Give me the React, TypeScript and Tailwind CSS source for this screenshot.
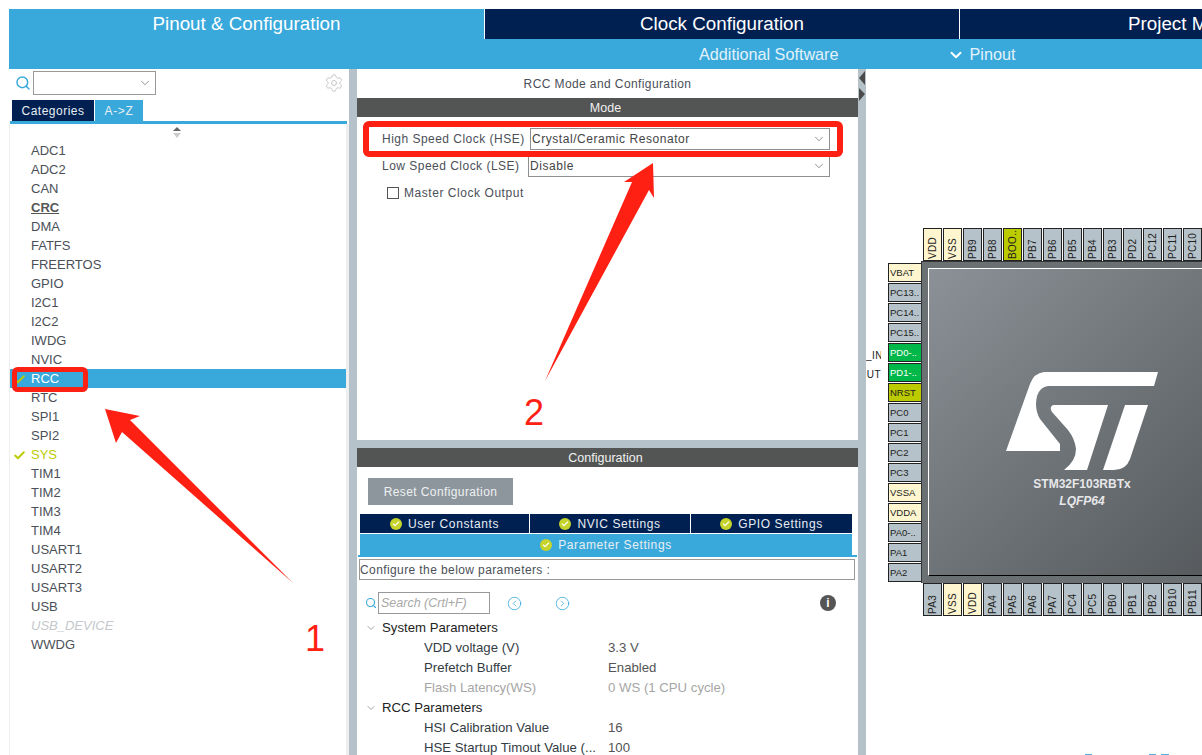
import * as React from 'react';
import { Check, ChevronDown, CircleChevronLeft, CircleChevronRight, Search, Settings } from 'lucide-react';

type PinKind = 'io' | 'power' | 'fixed' | 'on';

const KIND: Record<string, PinKind> = {
  VDD: 'power', VSS: 'power', VBAT: 'power', VSSA: 'power', VDDA: 'power',
  'BOO..': 'fixed', NRST: 'fixed', 'PD0-..': 'on', 'PD1-..': 'on',
};

const TOP_PINS = ['VDD', 'VSS', 'PB9', 'PB8', 'BOO..', 'PB7', 'PB6', 'PB5', 'PB4', 'PB3', 'PD2', 'PC12', 'PC11', 'PC10'];
const LEFT_PINS = ['VBAT', 'PC13..', 'PC14..', 'PC15..', 'PD0-..', 'PD1-..', 'NRST', 'PC0', 'PC1', 'PC2', 'PC3', 'VSSA', 'VDDA', 'PA0-..', 'PA1', 'PA2'];
const BOTTOM_PINS = ['PA3', 'VSS', 'VDD', 'PA4', 'PA5', 'PA6', 'PA7', 'PC4', 'PC5', 'PB0', 'PB1', 'PB2', 'PB10', 'PB11'];

const IP_LIST = ['ADC1', 'ADC2', 'CAN', 'CRC', 'DMA', 'FATFS', 'FREERTOS', 'GPIO', 'I2C1', 'I2C2', 'IWDG', 'NVIC', 'RCC', 'RTC', 'SPI1', 'SPI2', 'SYS', 'TIM1', 'TIM2', 'TIM3', 'TIM4', 'USART1', 'USART2', 'USART3', 'USB', 'USB_DEVICE', 'WWDG'];

const pinColor = (name: string) => {
  const kind = KIND[name] ?? 'io';
  if (kind === 'power') return 'bg-[#fff6cf] text-[#222]';
  if (kind === 'fixed') return 'bg-[#bccb00] text-[#222]';
  if (kind === 'on') return 'bg-[#00b74a] text-white';
  return 'bg-[#b6c2c9] text-[#222]';
};

// Pins above and below the package, label reads bottom to top
const VerticalPin = ({ name }: { name: string }) => (
  <div className={`flex h-[33px] w-[19px] shrink-0 items-center justify-center border border-[#222] pl-[1px] ${pinColor(name)}`}>
    <span className="h-full rotate-180 whitespace-nowrap pt-[1px] text-left text-[10px] leading-[16px] tracking-[0.3px] [writing-mode:vertical-rl]">{name}</span>
  </div>
);

const HorizontalPin = ({ name }: { name: string }) => (
  <div className={`flex h-[19px] w-[33px] shrink-0 items-center whitespace-nowrap border border-r-0 border-[#222] pl-[1px] pt-[2px] text-[9.5px] ${pinColor(name)}`}>
    {name}
  </div>
);

const StLogo = () => (
  <svg width="154" height="100" viewBox="1005 372 154 100" className="block">
    <path fill="#fff" d="M1158 373 L1044 373 Q1034 374 1030 385 L1006 452 L1060 452 L1060 445 L1040 420 Q1034 410 1037 397 Q1040 388 1048 387 L1154 387 Z" />
    <path fill="#fff" d="M1053 406 L1108 406 L1087 471 L1064 471 Q1076 462 1076 450 Q1075 440 1068 431 L1052 413 Q1049 408 1053 406 Z" />
    <path fill="#fff" d="M1125 406 L1148 406 L1130 460 Q1126 471 1114 471 L1103 471 Z" />
  </svg>
);

const TabCheck = () => (
  <span className="mr-[6px] flex h-[12px] w-[12px] items-center justify-center rounded-full bg-[#c5d32a]">
    <Check size={8} strokeWidth={3.5} className="text-white" />
  </span>
);

const ConfigTab = ({ label, className }: { label: string; className: string }) => (
  <div className={`flex items-center justify-center text-[12px] tracking-[0.6px] text-[#e8eef2] ${className}`}>
    <TabCheck />
    {label}
  </div>
);

const ParamRow = ({ label, value, muted }: { label: string; value: string; muted?: boolean }) => (
  <div className={`flex h-[20px] items-center pl-[67px] text-[13.2px] ${muted ? 'text-[#a6a6a6]' : 'text-[#333c44]'}`}>
    <span className="w-[184px] whitespace-nowrap">{label}</span>
    <span className={muted ? '' : 'text-[#555]'}>{value}</span>
  </div>
);

const ParamGroup = ({ label }: { label: string }) => (
  <div className="flex h-[20px] items-center pl-[8px] text-[13.2px] text-[#222]">
    <ChevronDown size={12} strokeWidth={1.2} className="mr-[5px] text-[#666]" />
    {label}
  </div>
);

const SelectBox = ({ value, className }: { value: string; className: string }) => (
  <div className={`flex items-center justify-between border border-[#8f8f8f] bg-white pl-[1px] pr-[3px] text-[12px] tracking-[0.55px] text-[#444] ${className}`}>
    {value}
    <ChevronDown size={14} strokeWidth={1.2} className="text-[#666]" />
  </div>
);

const LeftPanel = () => (
  <div className="flex w-[340px] shrink-0 flex-col">
    <div className="flex h-[31px] items-start pl-[6px] pr-[5px] pt-[2px]">
      <div className="flex h-[24px] w-full items-center">
        <Search size={16} strokeWidth={2.2} className="text-[#39a9dc]" />
        <div className="ml-[2px] flex h-[24px] w-[123px] items-center justify-end border border-[#999] pr-[3px]">
          <ChevronDown size={14} strokeWidth={1.2} className="text-[#666]" />
        </div>
        <Settings size={20} strokeWidth={1.2} className="ml-auto text-[#c8c8c8]" />
      </div>
    </div>
    <div className="flex h-[21px] pl-[3px]">
      <div className="flex w-[82px] items-center justify-center bg-[#002052] text-[12px] tracking-[0.5px] text-[#e8eef2]">Categories</div>
      <div className="ml-[1px] flex w-[48px] items-center justify-center bg-[#39a9dc] text-[12px] tracking-[0.7px] text-[#e8eef2]">A-&gt;Z</div>
    </div>
    <div className="ml-[1px] mr-[2px] h-[3px] bg-[#39a9dc]" />
    <div className="flex-1 border-l border-r-[3px] border-[#eeeeee] pr-0">
      <div className="flex h-[17px] justify-center pt-[3px] pr-[2px]">
        <svg width="8" height="11" viewBox="0 0 8 11">
          <path d="M4 0 L8 4 L0 4 Z" fill="#666" />
          <path d="M0 6 L8 6 L4 11 Z" fill="#ccc" />
        </svg>
      </div>
      {IP_LIST.map((name) => {
        const selected = name === 'RCC';
        const checked = selected || name === 'SYS';
        const color = selected
          ? 'bg-[#39a9dc] text-white'
          : name === 'SYS'
            ? 'text-[#bccb00]'
            : name === 'USB_DEVICE'
              ? 'italic text-[#c4c8cc]'
              : name === 'CRC'
                ? 'font-bold text-[#555] underline'
                : 'text-[#4b4f58]';
        return (
          <div key={name} className={`flex h-[19px] items-center pt-[1px] text-[13px] ${color}`}>
            <span className="flex w-[21px] justify-end pr-[5px]">
              {checked && <Check size={13} strokeWidth={3.5} className="text-[#bccb00]" />}
            </span>
            {name}
          </div>
        );
      })}
    </div>
  </div>
);

const MiddlePanel = () => (
  <div className="flex w-[501px] shrink-0 flex-col">
    <div className="flex h-[371px] flex-col">
      <div className="flex h-[29px] items-center justify-center text-[12px] tracking-[0.4px] text-[#4b4f58]">RCC Mode and Configuration</div>
      <div className="flex h-[19px] items-center justify-center bg-[#535554] pr-[4px] pt-[1px] text-[12.5px] text-[#f1f1f1]">Mode</div>
      <div className="mt-[11px] flex h-[22px] items-center pl-[25px] text-[12px] tracking-[0.48px] text-[#4b4f58]">
        <span className="w-[148px]">High Speed Clock (HSE)</span>
        <SelectBox value="Crystal/Ceramic Resonator" className="h-[22px] w-[300px]" />
      </div>
      <div className="mt-[5px] flex h-[22px] items-center pl-[25px] text-[12px] tracking-[0.48px] text-[#4b4f58]">
        <span className="w-[146px]">Low Speed Clock (LSE)</span>
        <SelectBox value="Disable" className="h-[22px] w-[302px]" />
      </div>
      <div className="mt-[6px] flex h-[20px] items-center pl-[30px] text-[12px] tracking-[0.55px] text-[#4b4f58]">
        <span className="mr-[5px] h-[12px] w-[12px] border border-[#555]" />
        Master Clock Output
      </div>
    </div>
    <div className="h-[8px] bg-[#b6c2c9]" />
    <div className="flex flex-1 flex-col overflow-hidden">
      <div className="flex h-[19px] shrink-0 items-center justify-center bg-[#535554] pr-[4px] pt-[1px] text-[12.5px] text-[#f1f1f1]">Configuration</div>
      <div className="mt-[11px] ml-[11px] flex h-[27px] w-[145px] shrink-0 items-center justify-center bg-[#8d969c] text-[12px] tracking-[0.4px] text-[#eef1f3]">Reset Configuration</div>
      <div className="mt-[9px] ml-[3px] flex h-[19px] w-[492px] shrink-0 gap-[1px]">
        <ConfigTab label="User Constants" className="w-[169px] bg-[#002052]" />
        <ConfigTab label="NVIC Settings" className="w-[160px] bg-[#002052]" />
        <ConfigTab label="GPIO Settings" className="flex-1 bg-[#002052]" />
      </div>
      <ConfigTab label="Parameter Settings" className="mt-[1px] ml-[3px] h-[21px] w-[492px] shrink-0 bg-[#39a9dc]" />
      <div className="ml-[1px] mr-[1px] h-[2px] shrink-0 bg-[#39a9dc]" />
      <div className="mt-[2px] ml-[2px] flex h-[21px] w-[496px] shrink-0 items-center border border-[#999] text-[12px] tracking-[0.4px] text-[#4b4f58]">
        Configure the below parameters :
      </div>
      <div className="mt-[12px] flex h-[22px] shrink-0 items-center pl-[8px]">
        <Search size={12} strokeWidth={2.2} className="text-[#39a9dc]" />
        <div className="ml-[1px] flex h-[22px] w-[112px] items-center border border-[#999] pl-[2px] text-[12.5px] italic text-[#a8a8a8]">Search (Crtl+F)</div>
        <CircleChevronLeft size={15} strokeWidth={1.3} className="ml-[17px] text-[#39a9dc]" />
        <CircleChevronRight size={15} strokeWidth={1.3} className="ml-[33px] text-[#39a9dc]" />
        <span className="ml-auto mr-[22px] flex h-[16px] w-[16px] items-center justify-center rounded-full bg-[#555] text-[12px] font-bold text-white">i</span>
      </div>
      <div className="mt-[4px] shrink-0">
        <ParamGroup label="System Parameters" />
        <ParamRow label="VDD voltage (V)" value="3.3 V" />
        <ParamRow label="Prefetch Buffer" value="Enabled" />
        <ParamRow label="Flash Latency(WS)" value="0 WS (1 CPU cycle)" muted />
        <ParamGroup label="RCC Parameters" />
        <ParamRow label="HSI Calibration Value" value="16" />
        <ParamRow label="HSE Startup Timout Value (..." value="100" />
      </div>
    </div>
  </div>
);

const ChipView = () => (
  <div className="relative flex-1 overflow-hidden pt-[159px] pl-[22px]">
    <div className="flex w-[360px] flex-col">
      <div className="ml-[35px] flex gap-[1px]">
        {TOP_PINS.map((p, i) => <VerticalPin key={i} name={p} />)}
      </div>
      <div className="flex">
        <div className="mt-[2px] flex flex-col gap-[1px]">
          {LEFT_PINS.map((p, i) => <HorizontalPin key={i} name={p} />)}
        </div>
        <div className="h-[322px] w-[327px] shrink-0 border-t border-l border-[#33373a] bg-[#6b7073] pt-[6px] pl-[6px]">
          <div className="flex h-[308px] flex-col items-center border-t border-l border-b border-t-white border-l-white border-b-black bg-gradient-to-br from-[#8b9196] to-[#53575a] pt-[102px] pr-[13px]">
            <StLogo />
            <div className="mt-[6px] text-[12px] font-bold leading-[14px] text-[#e6e8ea]">STM32F103RBTx</div>
            <div className="mt-[3px] text-[12px] font-bold italic leading-[14px] text-[#e6e8ea]">LQFP64</div>
          </div>
        </div>
      </div>
      <div className="ml-[35px] flex gap-[1px]">
        {BOTTOM_PINS.map((p, i) => <VerticalPin key={i} name={p} />)}
      </div>
    </div>
    {/* signal labels cut off by the splitter */}
    <div className="absolute left-0 top-[281px] w-[15px] overflow-hidden text-right text-[10px] leading-[12px] tracking-[0.5px] text-[#222]">_IN</div>
    <div className="absolute left-0 top-[300px] w-[15px] overflow-hidden whitespace-nowrap text-right text-[10px] leading-[12px] tracking-[0.5px] text-[#222] [direction:rtl]">OUT</div>
    {/* tops of the zoom toolbar icons below the fold */}
    <div className="absolute left-[219px] top-[685px] h-px w-[7px] bg-[#5aaee0]" />
    <div className="absolute left-[283px] top-[685px] h-px w-[7px] bg-[#5aaee0]" />
    <div className="absolute left-[295px] top-[685px] h-px w-[8px] bg-[#5aaee0]" />
  </div>
);

const Annotations = () => (
  <>
    <svg width="1202" height="755" className="pointer-events-none absolute left-0 top-0">
      <rect x="14.5" y="369.5" width="71" height="20" rx="3" fill="none" stroke="#ff2014" strokeWidth="5" />
      <rect x="366" y="124" width="474" height="30" rx="3" fill="none" stroke="#ff2014" strokeWidth="6" />
      <path fill="#ff2014" d="M105 409 L140 416 L130 420 L293 583 L122 432 L116 443 Z" />
      <path fill="#ff2014" d="M653 163 L654 198 L649 190 L545 381 L632 182 L624 182 Z" />
    </svg>
    <span className="absolute left-[305px] top-[618px] text-[36px] leading-[42px] text-[#ff2014]">1</span>
    <span className="absolute left-[524px] top-[392px] text-[36px] leading-[42px] text-[#ff2014]">2</span>
  </>
);

export default function App() {
  return (
    <div className="relative h-[755px] w-[1202px] overflow-hidden bg-white pl-[9px] pt-[9px] font-['Liberation_Sans',Arial,sans-serif]">
      <div className="flex h-[30px] text-[18.8px] text-white">
        <div className="flex w-[475px] shrink-0 items-center justify-center bg-[#39a9dc] pt-[1px]">Pinout &amp; Configuration</div>
        <div className="ml-[1px] flex w-[474px] shrink-0 items-center justify-center bg-[#002052] pt-[1px]">Clock Configuration</div>
        <div className="ml-[1px] flex flex-1 items-center overflow-hidden whitespace-nowrap bg-[#002052] pl-[168px] pt-[1px]">Project M</div>
      </div>
      <div className="flex h-[30px] items-center bg-[#39a9dc] pt-[1px] text-[16.2px] text-[#e3f2fa]">
        <span className="ml-[690px]">Additional Software</span>
        <ChevronDown size={18} strokeWidth={2.5} className="ml-[109px] text-white" />
        <span className="ml-[4px]">Pinout</span>
      </div>
      <div className="flex h-[686px]">
        <LeftPanel />
        <div className="w-[8px] shrink-0 bg-[#b6c2c9]" />
        <MiddlePanel />
        <div className="w-[8px] shrink-0 bg-[#b6c2c9] pt-[1px]">
          <svg width="8" height="32" viewBox="0 0 8 32" className="block">
            <path d="M7 1 L7 15 L1 8 Z" fill="#4a4a4a" />
            <path d="M1 18 L1 31 L7 24 Z" fill="#4a4a4a" />
          </svg>
        </div>
        <ChipView />
      </div>
      <Annotations />
    </div>
  );
}
